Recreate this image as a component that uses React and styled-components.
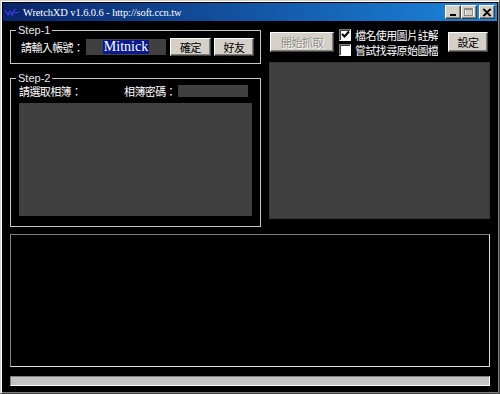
import styled, { createGlobalStyle } from "styled-components";

const GlobalStyle = createGlobalStyle`
  html, body {
    margin: 0;
    padding: 0;
    background: #000;
    overflow: hidden;
  }
`;

const cjk = `"Noto Sans CJK TC", "Noto Sans", sans-serif`;

const Window = styled.div`
  width: 500px;
  height: 394px;
  box-sizing: border-box;
  display: flex;
  flex-direction: column;
  background: #000;
  border: 1px solid;
  border-color: #d4d0c8 #404040 #404040 #d4d0c8;
  padding: 2px;
  box-shadow: inset 1px 1px #ffffff, inset -1px -1px #808080;
`;

const TitleBar = styled.div`
  height: 18px;
  display: flex;
  align-items: center;
  padding: 0 2px 0 1px;
  background: linear-gradient(to right, #0a246a, #1c86de);
`;

const TitleText = styled.span`
  margin-left: 3px;
  color: #fff;
  font-family: "Liberation Serif", serif;
  font-size: 10.5px;
  letter-spacing: -0.1px;
`;

const TitleButtons = styled.div`
  margin-left: auto;
  display: flex;
`;

const CaptionButton = styled.div`
  width: 16px;
  height: 14px;
  box-sizing: border-box;
  margin-left: ${(p) => (p.$gap ? "2px" : "0")};
  background: #d4d0c8;
  border: 1px solid;
  border-color: #fff #404040 #404040 #fff;
  box-shadow: inset -1px -1px #808080;
  display: flex;
  align-items: center;
  justify-content: center;
`;

const Body = styled.div`
  flex: 1;
  display: flex;
  flex-direction: column;
  padding: 6px 7px 5px 7px;
`;

const TopSection = styled.div`
  display: flex;
  gap: 8px;
  height: 200px;
`;

const LeftColumn = styled.div`
  width: 251px;
  display: flex;
  flex-direction: column;
  padding-top: 3px;
  gap: 14px;
`;

const GroupBox = styled.div`
  position: relative;
  box-sizing: border-box;
  height: ${(p) => p.$height}px;
  border: 1px solid #c8c8c8;
  display: flex;
  flex-direction: column;
`;

const Legend = styled.span`
  position: absolute;
  top: -8px;
  left: 5px;
  padding: 0 2px;
  background: #000;
  color: #e8e8e8;
  font-family: "Liberation Sans", Arial, sans-serif;
  font-size: 11px;
  line-height: 14px;
`;

const AccountRow = styled.div`
  flex: 1;
  display: flex;
  align-items: center;
  padding-left: 10px;
`;

const Label = styled.span`
  color: #fff;
  font-family: ${cjk};
  font-size: 11px;
  letter-spacing: -0.6px;
  line-height: 12px;
  white-space: nowrap;
  width: ${(p) => (p.$width ? `${p.$width}px` : "auto")};
`;

const TextField = styled.div`
  width: ${(p) => p.$width}px;
  height: ${(p) => p.$height}px;
  background: #404040;
  display: flex;
  align-items: center;
  justify-content: center;
`;

const Selected = styled.span`
  background: #0a1a8a;
  color: #fff;
  font-family: "Liberation Serif", serif;
  font-size: 14px;
  line-height: 14px;
  padding: 0 1px;
`;

const Button = styled.div`
  width: ${(p) => p.$width}px;
  height: ${(p) => p.$height}px;
  box-sizing: border-box;
  margin-left: ${(p) => (p.$push ? "auto" : `${p.$ml || 0}px`)};
  margin-right: ${(p) => p.$mr || 0}px;
  background: #d4d0c8;
  border: 1px solid;
  border-color: #fff #404040 #404040 #fff;
  box-shadow: inset -1px -1px #808080;
  display: flex;
  align-items: center;
  justify-content: center;
  font-family: ${cjk};
  font-size: 11px;
  letter-spacing: -0.5px;
  color: ${(p) => (p.$disabled ? "#8c8a84" : "#000")};
  text-shadow: ${(p) => (p.$disabled ? "1px 1px #fff" : "none")};
  flex-shrink: 0;
`;

const AlbumBody = styled.div`
  flex: 1;
  display: flex;
  flex-direction: column;
  gap: 6px;
  padding: 6px 8px 10px 8px;
`;

const AlbumRow = styled.div`
  height: 12px;
  display: flex;
  align-items: center;
  justify-content: space-between;
`;

const PasswordGroup = styled.div`
  display: flex;
  align-items: center;
  gap: 2px;
  margin-right: 4px;
`;

const ListBox = styled.div`
  height: 113px;
  background: #404040;
`;

const RightColumn = styled.div`
  width: 221px;
  display: flex;
  flex-direction: column;
  gap: 5px;
`;

const Toolbar = styled.div`
  height: 30px;
  display: flex;
  align-items: center;
`;

const CheckGroup = styled.div`
  display: flex;
  flex-direction: column;
  gap: 2px;
  margin-left: 5px;
`;

const CheckRow = styled.label`
  height: 13px;
  display: flex;
  align-items: center;
  gap: 4px;
  overflow: hidden;
`;

const CheckBox = styled.span`
  width: 12px;
  height: 12px;
  box-sizing: border-box;
  background: #fff;
  border: 1px solid;
  border-color: #808080 #fff #fff #808080;
  box-shadow: inset 1px 1px #404040;
  display: flex;
  align-items: center;
  justify-content: center;
  flex-shrink: 0;
`;

const Preview = styled.div`
  height: 157px;
  box-sizing: border-box;
  background: #404040;
  border: 1px solid #363636;
`;

const LogBox = styled.div`
  flex: 1;
  margin-top: 7px;
  background: #000;
  border: 1px solid;
  border-color: #808080 #e0e0e0 #e0e0e0 #808080;
`;

const Progress = styled.div`
  height: 10px;
  margin-top: 9px;
  box-sizing: border-box;
  background: #c4c4c4;
  border: 1px solid;
  border-color: #808080 #fff #fff #808080;
`;

function Check({ checked }) {
  return (
    <CheckBox>
      {checked && (
        <svg width="9" height="9" viewBox="0 0 9 9">
          <path d="M1 4 L3.5 6.5 L8 1.5" fill="none" stroke="#000" strokeWidth="2" />
        </svg>
      )}
    </CheckBox>
  );
}

export default function App() {
  return (
    <>
      <GlobalStyle />
      <Window>
        <TitleBar>
          <svg width="16" height="14" viewBox="0 0 16 14">
            <path d="M1 5 L4 10 L6 6 L8 10 L11 4 M10 8 L15 7" fill="none" stroke="#3c3ce0" strokeWidth="1.2" />
          </svg>
          <TitleText>WretchXD v1.6.0.6 - http://soft.ccn.tw</TitleText>
          <TitleButtons>
            <CaptionButton>
              <svg width="10" height="9" viewBox="0 0 10 9">
                <rect x="2" y="6" width="6" height="2" fill="#000" />
              </svg>
            </CaptionButton>
            <CaptionButton>
              <svg width="10" height="9" viewBox="0 0 10 9">
                <rect x="1.5" y="0.5" width="8" height="7" fill="none" stroke="#fff" />
                <rect x="0.5" y="0.5" width="8" height="7" fill="none" stroke="#8c8a84" />
                <rect x="0.5" y="1" width="8" height="1" fill="#8c8a84" />
              </svg>
            </CaptionButton>
            <CaptionButton $gap>
              <svg width="10" height="9" viewBox="0 0 10 9">
                <path d="M1 1 L8 8 M8 1 L1 8 M2 1 L9 8 M9 1 L2 8" stroke="#000" strokeWidth="1.1" />
              </svg>
            </CaptionButton>
          </TitleButtons>
        </TitleBar>
        <Body>
          <TopSection>
            <LeftColumn>
              <GroupBox $height={34}>
                <Legend>Step-1</Legend>
                <AccountRow>
                  <Label $width={65}>請輸入帳號：</Label>
                  <TextField $width={80} $height={16}>
                    <Selected>Mitnick</Selected>
                  </TextField>
                  <Button $width={41} $height={18} $ml={4}>確定</Button>
                  <Button $width={40} $height={18} $ml={3}>好友</Button>
                </AccountRow>
              </GroupBox>
              <GroupBox $height={149}>
                <Legend>Step-2</Legend>
                <AlbumBody>
                  <AlbumRow>
                    <Label>請選取相簿：</Label>
                    <PasswordGroup>
                      <Label>相簿密碼：</Label>
                      <TextField $width={70} $height={12} />
                    </PasswordGroup>
                  </AlbumRow>
                  <ListBox />
                </AlbumBody>
              </GroupBox>
            </LeftColumn>
            <RightColumn>
              <Toolbar>
                <Button $width={64} $height={20} $ml={1} $disabled>開始抓取</Button>
                <CheckGroup>
                  <CheckRow>
                    <Check checked />
                    <Label>檔名使用圖片註解</Label>
                  </CheckRow>
                  <CheckRow>
                    <Check />
                    <Label>嘗試找尋原始圖檔</Label>
                  </CheckRow>
                </CheckGroup>
                <Button $width={40} $height={20} $mr={2} $push>設定</Button>
              </Toolbar>
              <Preview />
            </RightColumn>
          </TopSection>
          <LogBox />
          <Progress />
        </Body>
      </Window>
    </>
  );
}
